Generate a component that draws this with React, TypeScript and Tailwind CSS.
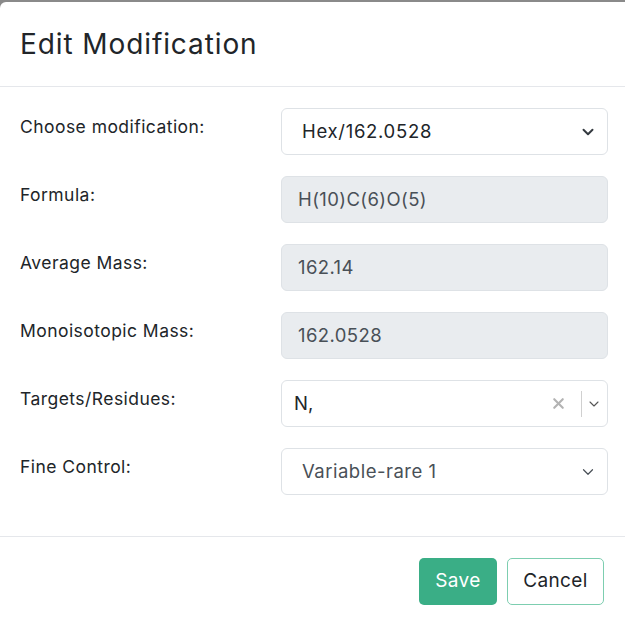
import { ChevronDown, X } from "lucide-react";

const font = { fontFamily: "Inter, 'Noto Sans', sans-serif" };

function Row({ label, children }: { label: string; children: React.ReactNode }) {
  return (
    <div className="flex items-start">
      <label className="w-[261px] shrink-0 pt-[6px] text-[17.5px] leading-[26px] tracking-[0.45px] text-[#212529]">
        {label}
      </label>
      <div className="w-[327px] shrink-0">{children}</div>
    </div>
  );
}

function Select({ value, muted }: { value: string; muted?: boolean }) {
  return (
    <div className="flex h-[47px] items-center justify-between rounded-[6px] border border-[#dee2e6] bg-white pl-[20px] pr-[10px]">
      <span
        className={
          muted
            ? "text-[18.5px] tracking-[0.5px] text-[#495057]"
            : "text-[18.5px] tracking-[0.7px] text-[#212529]"
        }
      >
        {value}
      </span>
      <ChevronDown
        size={18}
        strokeWidth={muted ? 1.6 : 2.6}
        className={muted ? "text-[#495057]" : "text-[#343a40]"}
      />
    </div>
  );
}

function ReadOnly({ value }: { value: string }) {
  return (
    <div className="flex h-[47px] items-center rounded-[6px] border border-[#dee2e6] bg-[#e9ecef] pl-[16px]">
      <span className="text-[18.5px] tracking-[0.4px] text-[#495057]">{value}</span>
    </div>
  );
}

function MultiSelect({ value }: { value: string }) {
  return (
    <div className="flex h-[47px] items-center rounded-[6px] border border-[#dee2e6] bg-white pl-[12px]">
      <span className="flex-1 text-[18.5px] text-[#212529]">{value}</span>
      <X size={17} strokeWidth={3} className="mr-[14px] text-[#b3b3b3]" />
      <div className="h-[26px] w-px bg-[#d0d0d0]" />
      <ChevronDown size={16} strokeWidth={1.6} className="ml-[4px] mr-[5px] text-[#555]" />
    </div>
  );
}

export default function App() {
  return (
    <div style={font} className="min-h-[621px] bg-[#8a8a8a] pt-[2px]">
      <div className="min-h-[619px] rounded-tl-[6px] bg-white">
        <header className="flex h-[85px] items-center border-b border-[#e5e7eb] px-[20px]">
          <h1 className="text-[28px] font-normal tracking-[0.9px] text-[#212529]">Edit Modification</h1>
        </header>
        <div className="flex flex-col gap-[21px] px-[20px] pb-[41px] pt-[21px]">
          <Row label="Choose modification:">
            <Select value="Hex/162.0528" />
          </Row>
          <Row label="Formula:">
            <ReadOnly value="H(10)C(6)O(5)" />
          </Row>
          <Row label="Average Mass:">
            <ReadOnly value="162.14" />
          </Row>
          <Row label="Monoisotopic Mass:">
            <ReadOnly value="162.0528" />
          </Row>
          <Row label="Targets/Residues:">
            <MultiSelect value="N," />
          </Row>
          <Row label="Fine Control:">
            <Select value="Variable-rare 1" muted />
          </Row>
        </div>
        <footer className="flex justify-end gap-[10px] border-t border-[#e5e7eb] pr-[21px] pt-[21px]">
          <button className="h-[47px] w-[78px] rounded-[5px] bg-[#3aae86] text-[19px] tracking-[0.4px] text-white">
            Save
          </button>
          <button className="h-[47px] w-[97px] rounded-[5px] border border-[#7dceb0] bg-white text-[19px] tracking-[0.4px] text-[#212529]">
            Cancel
          </button>
        </footer>
      </div>
    </div>
  );
}
